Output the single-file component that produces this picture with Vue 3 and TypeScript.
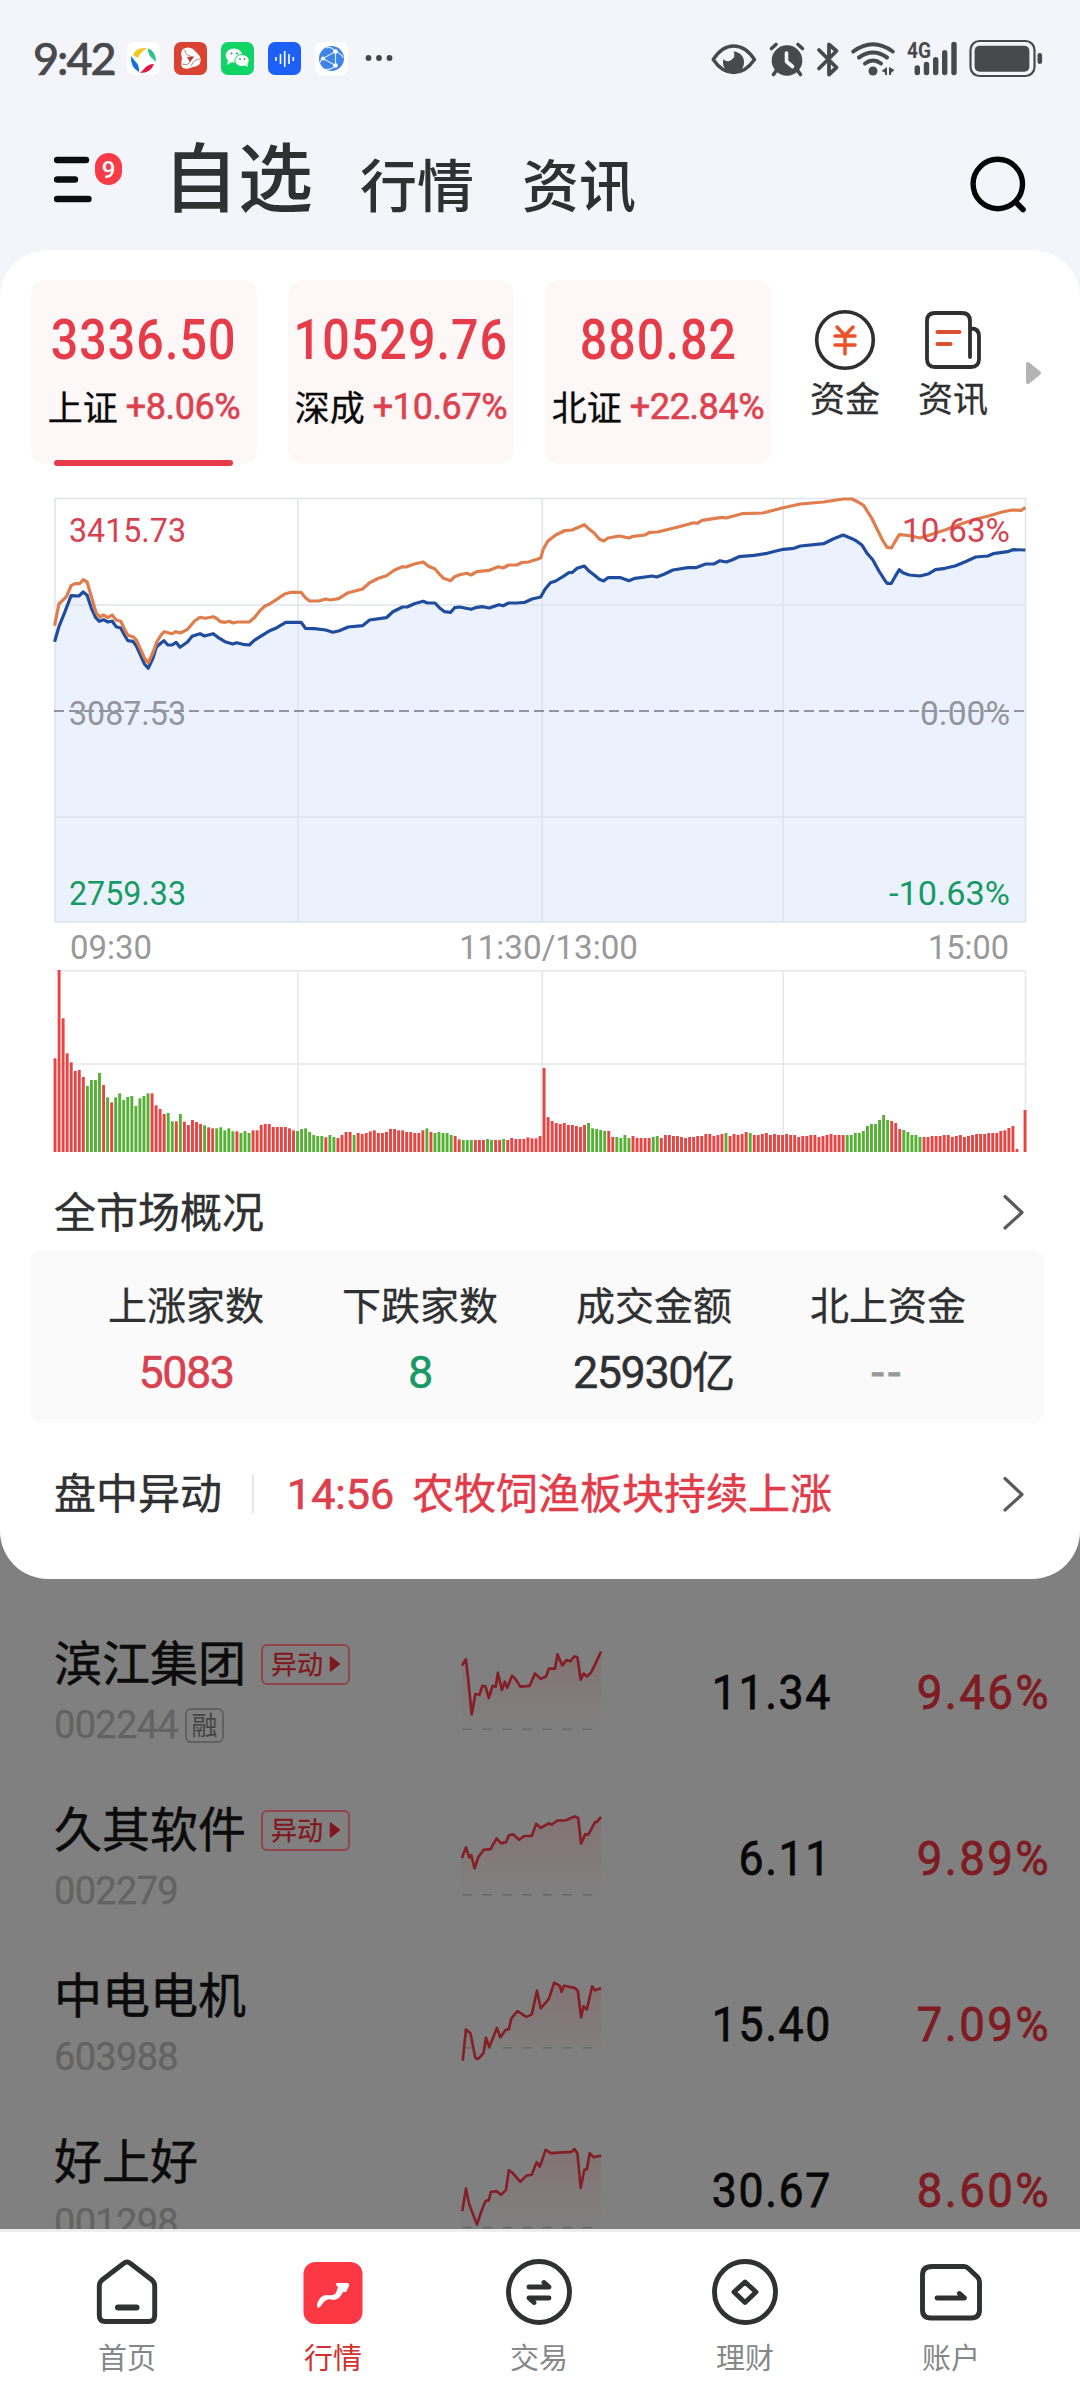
<script setup lang="ts">
interface IndexCard { value: string; name: string; change: string; active?: boolean }
interface Stat { label: string; value: string; unit?: string; tone: string }
interface Stock {
  name: string; code: string; price: string; change: string
  moving?: boolean; margin?: boolean; base: number; points: string
}

const indices: IndexCard[] = [
  { value: '3336.50', name: '上证', change: '+8.06%', active: true },
  { value: '10529.76', name: '深成', change: '+10.67%' },
  { value: '880.82', name: '北证', change: '+22.84%' },
]

const stats: Stat[] = [
  { label: '上涨家数', value: '5083', tone: 'up' },
  { label: '下跌家数', value: '8', tone: 'down' },
  { label: '成交金额', value: '25930', unit: '亿', tone: 'flat' },
  { label: '北上资金', value: '--', tone: 'none' },
]

/* Intraday samples: x in 1/2.8 px, y in 1/3 px from the chart origin */
const leadRaw =
  '153,467 165,402 186,380 199,347 210,341 223,341 233,329 244,336 256,380 269,428 280,441 290,435 302,443 314,435 325,450 338,454 348,476 358,496 372,500 382,510 404,563 415,578 428,548 440,514 452,494 460,485 482,491 492,485 505,489 525,478 545,453 560,442 575,445 597,440 606,445 617,455 630,457 642,454 652,459 665,456 698,456 712,443 728,422 742,408 755,402 775,388 797,372 815,367 843,367 855,383 867,393 893,393 912,387 925,390 948,386 975,368 1015,357 1035,338 1060,325 1082,317 1105,300 1127,290 1137,291 1160,282 1185,276 1200,289 1218,297 1232,314 1242,325 1262,332 1273,320 1287,314 1307,310 1319,315 1335,305 1370,301 1395,290 1409,294 1424,285 1447,285 1460,278 1480,276 1514,264 1521,238 1534,213 1556,195 1581,182 1602,180 1636,164 1648,176 1663,188 1679,208 1691,213 1702,204 1734,198 1761,204 1773,199 1806,195 1819,187 1841,186 1896,172 1943,158 1952,160 1966,151 2021,142 2033,144 2078,131 2136,129 2193,113 2241,102 2306,96 2361,87 2386,87 2401,95 2418,106 2441,145 2456,178 2471,210 2484,232 2496,234 2506,215 2518,194 2541,196 2576,204 2601,196 2646,180 2696,160 2736,146 2768,138 2806,126 2834,120 2859,121 2871,113'
const priceRaw =
  '153,515 165,470 180,430 199,377 221,378 233,366 244,376 256,415 268,443 278,454 290,449 302,456 314,453 325,470 338,474 348,494 358,512 372,514 382,528 404,581 415,595 428,565 438,531 450,520 459,512 470,525 482,525 493,517 504,532 525,516 538,499 560,491 572,498 597,491 610,502 630,515 652,522 663,518 680,523 698,525 712,511 752,484 775,473 800,457 843,457 855,475 880,476 912,480 932,487 950,482 975,471 1015,467 1035,450 1082,443 1100,425 1127,411 1140,411 1160,401 1185,394 1197,399 1218,399 1232,415 1245,425 1262,427 1273,413 1287,411 1319,418 1335,412 1352,410 1370,414 1397,404 1409,407 1424,399 1447,399 1470,397 1490,387 1514,381 1526,358 1541,338 1556,333 1576,320 1593,308 1603,307 1616,295 1636,288 1648,302 1663,314 1678,328 1690,333 1702,323 1738,323 1761,332 1778,325 1826,318 1839,321 1861,312 1884,300 1926,293 1948,293 1976,282 1999,282 2016,272 2034,276 2051,269 2069,260 2111,256 2148,250 2193,238 2223,235 2241,228 2306,221 2334,206 2361,195 2386,206 2401,215 2414,226 2428,250 2444,270 2461,303 2476,328 2484,340 2496,340 2506,320 2518,299 2528,308 2546,315 2576,318 2601,311 2619,299 2646,295 2676,287 2706,274 2732,261 2766,258 2781,251 2821,245 2836,239 2871,240'

const toPixels = (raw: string): string =>
  raw
    .split(' ')
    .map((p) => {
      const [x, y] = p.split(',').map(Number)
      return `${(x / 2.8).toFixed(1)},${(y / 3 + 470).toFixed(1)}`
    })
    .join(' ')

const leadLine = toPixels(leadRaw)
const priceLine = toPixels(priceRaw)
const priceArea = `54.6,922 ${priceLine} 1025.4,922`

/* One bar per minute: r/g is the direction, the number the bar's top in 1/3 px */
const volumeRaw =
  'r325 r60 r205 r310 r337 r363 r360 r381 g408 g390 g390 g369 r405 g442 r457 g442 g430 g450 g441 g438 g468 g445 g438 g430 r430 r466 r477 r492 g489 g514 r514 g492 r515 r525 r510 r516 r522 g526 r532 r535 g535 g532 g541 g535 g544 r544 g549 g543 g549 r541 r541 r525 r522 r522 r531 r531 r531 r531 r535 r541 g543 g537 g535 g546 g555 g558 g558 r562 g555 g561 r564 r555 r546 r546 g555 r549 r552 r549 r544 r541 r549 r549 r546 r537 r537 r541 r541 r546 r546 r549 r549 r541 g535 r546 g549 g546 g549 g549 g555 r558 r568 g570 g570 g570 r570 r570 r570 g567 g570 r570 r570 g567 r570 r564 r567 r567 r567 r562 r565 r565 r558 ' +
  'r354 r501 r513 r519 r522 r519 r525 r525 r528 r531 r525 g519 g535 g537 g540 g543 r543 r561 g561 g564 g555 g564 r558 r564 r564 r564 r564 g561 g558 r564 r555 r555 r558 r558 r561 r564 r561 r561 r558 r558 r552 r552 r558 r555 r552 g549 r558 r552 r555 r552 r546 g549 r555 r555 r552 r549 r555 r552 r555 r555 r552 r555 r555 r561 r558 r558 r555 r555 r561 r558 r555 r552 r555 r555 r555 g555 g555 g549 g549 g543 g528 g522 g522 g510 g495 g510 r513 r519 r537 g540 g546 g555 g555 g561 r561 r561 r558 r558 r558 r555 r555 r561 r558 r555 r561 r558 r555 r552 r552 r552 r549 r549 r549 r543 r541 r534 r528 r597 r606 r480'
const volumeList = volumeRaw.split(' ')
const volumes = volumeList.map((v, i) => {
  const h = (606 - Number(v.slice(1))) / 3
  return {
    x: 53.6 + (i * 970) / (volumeList.length - 1),
    y: 1152 - h,
    h,
    color: v[0] === 'r' ? '#e64543' : '#55b035',
  }
})

const stocks: Stock[] = [
  {
    name: '滨江集团', code: '002244', price: '11.34', change: '9.46%', moving: true, margin: true, base: 316,
    points: '1132,160 1142,145 1147,190 1156,280 1165,230 1175,232 1182,210 1190,212 1198,240 1207,210 1215,212 1220,178 1230,220 1237,200 1243,215 1255,185 1263,193 1275,212 1298,210 1311,180 1325,193 1338,187 1345,168 1360,168 1366,133 1378,160 1388,147 1398,150 1407,138 1415,140 1423,195 1430,180 1438,187 1448,178 1458,158 1473,126',
  },
  {
    name: '久其软件', code: '002279', price: '6.11', change: '9.89%', moving: true, base: 722,
    points: '1132,632 1142,606 1150,630 1155,625 1163,657 1172,630 1185,612 1202,610 1217,584 1228,596 1240,593 1247,576 1258,574 1272,587 1285,578 1303,578 1314,548 1325,558 1345,547 1352,550 1366,540 1385,540 1408,530 1417,534 1424,597 1434,574 1442,574 1458,544 1462,544 1473,531',
  },
  {
    name: '中电电机', code: '603988', price: '15.40', change: '7.09%', base: 1097,
    points: '1134,1128 1142,1052 1153,1062 1165,1122 1172,1124 1185,1110 1191,1072 1199,1095 1218,1048 1226,1071 1240,1052 1247,1052 1253,1025 1268,1007 1290,1021 1303,1015 1316,957 1325,1000 1345,977 1358,937 1372,945 1376,960 1382,945 1408,950 1416,957 1424,1022 1430,995 1438,1003 1451,946 1458,956 1473,951',
  },
  {
    name: '好上好', code: '001298', price: '30.67', change: '8.60%', base: 1537,
    points: '1133,1497 1142,1442 1150,1480 1169,1530 1180,1496 1190,1472 1198,1470 1203,1450 1217,1448 1228,1457 1240,1445 1247,1397 1256,1403 1275,1425 1290,1410 1303,1408 1315,1377 1323,1388 1337,1347 1350,1355 1400,1352 1408,1345 1415,1355 1423,1440 1432,1395 1438,1395 1445,1355 1455,1365 1473,1361',
  },
]
const sparkBox = (i: number): string => `1120 ${110 + i * 406.7} 365 230`

const tabs = ['首页', '行情', '交易', '理财', '账户']
</script>

<template>
  <div class="screen">
    <div class="status">
      <span class="clock">9:42</span>
      <svg class="apps" width="270" height="38" viewBox="125 40 270 38">
        <rect x="127" y="42" width="33" height="33" rx="7" fill="#fff" />
        <path d="M133 55Q136 47 147 48L143 51Q139 54 138 58Z" fill="#f4c61c" />
        <path d="M148 48.500Q156 51 156 62L153 59Q149 56 148 51Z" fill="#28c487" />
        <path d="M154 64Q151 73 140 73L144 69Q148 64 154 64Z" fill="#e3163f" />
        <path d="M139 72Q130 67 131 56L135 61Q140 66 139 72Z" fill="#1570d8" />
        <rect x="174" y="42" width="33" height="33" rx="7" fill="#da4331" />
        <path d="M183 49 Q188 46 193 49 Q196 52 198 54 Q202 58 200 63 Q199 66 193 67 Q187 70 183 68 Q180 66 182 59 Q180 51 183 49Z" fill="#fff" />
        <path d="M187 57h7l-4 5z" fill="#c0392b" />
        <path d="M185 50q0 6 9 7M200 59q-6 0-9 7M182 64q7 2 8-3" fill="none" stroke="#b9857d" stroke-width="1" />
        <rect x="221" y="42" width="33" height="33" rx="7" fill="#10d566" />
        <ellipse cx="234" cy="55.500" rx="8.300" ry="7" fill="#fff" />
        <path d="M228 60l-1 5 5-3z" fill="#fff" />
        <ellipse cx="242" cy="60.500" rx="7.200" ry="6" fill="#fff" stroke="#10d566" stroke-width="1" />
        <path d="M244 65l4 2-1-4z" fill="#fff" />
        <g fill="#1aa75a"><circle cx="231.500" cy="53.500" r="1.100" /><circle cx="237" cy="53.500" r="1.100" /><circle cx="240" cy="59" r="0.900" /><circle cx="244.500" cy="59" r="0.900" /></g>
        <rect x="268" y="42" width="33" height="33" rx="7" fill="#1c60f8" />
        <path d="M276 57v4M280.500 54v10M284.700 51v16M289 54v10M293.300 57v4" stroke="#fff" stroke-width="1.600" />
        <rect x="315" y="42" width="33" height="33" rx="7" fill="#fff" />
        <circle cx="331.500" cy="58.500" r="12.500" fill="#3e83e6" />
        <path d="M323 58.500L335.500 51.500V65.500ZM335.500 51.500Q331 46 326 48M335.500 65.500Q330 71 325 69M335.500 51.500Q342 54 343 58M323 58.500Q320 60 320 63" fill="none" stroke="#d5e6ff" stroke-width="1.200" />
        <g fill="#fff"><circle cx="323" cy="58.500" r="2" /><circle cx="335.500" cy="51.500" r="2.300" /><circle cx="335.500" cy="65.500" r="2.300" /></g>
        <g fill="#444548"><circle cx="368.500" cy="58" r="2.900" /><circle cx="379" cy="58" r="2.900" /><circle cx="389.500" cy="58" r="2.900" /></g>
      </svg>
      <svg class="signals" width="336" height="42" viewBox="709 37 336 42">
        <path d="M713.200 58.500Q722 45 733.700 45Q745.500 45 754.500 58.500Q745.500 71.500 733.700 71.500Q722 71.500 713.200 58.500Z" fill="none" stroke="#48494c" stroke-width="3.400" stroke-linejoin="round" />
        <path d="M733.500 50.500A10.500 10.800 0 1 1 723.500 58Q726 61.500 730 59.800Q736.500 56 733.500 50.500Z" fill="#48494c" />
        <circle cx="787" cy="59.500" r="15.300" fill="#48494c" />
        <path d="M786.500 52v8.500l6 5" fill="none" stroke="#f4f5fa" stroke-width="3.600" stroke-linecap="round" stroke-linejoin="round" />
        <path d="M771.500 47.500l4.500-4M802.500 47.500l-4.500-4M776 70l-2.500 3.500M798 70l2.500 3.500" stroke="#48494c" stroke-width="3.600" stroke-linecap="round" />
        <path d="M819 49L836.500 66.500L829 73.500V43.500L836.500 50L819 67.500" fill="none" stroke="#48494c" stroke-width="3.800" stroke-linecap="round" stroke-linejoin="round" />
        <g fill="none" stroke="#48494c" stroke-width="4" stroke-linecap="round"><path d="M853.300 50.500Q873 36 892.700 50.500" /><path d="M859 56.500Q873 46.500 887 56.500" /><path d="M865 62.500Q873 56.500 881 62.500" /></g>
        <circle cx="873" cy="70" r="4.500" fill="#48494c" />
        <path d="M887 66v8h-2v-2.500l-3.500-1.500zM889 66v8h2v-2l3.500-3z" fill="#48494c" />
        <text x="907" y="57" class="net" textLength="24" lengthAdjust="spacingAndGlyphs">4G</text>
        <path d="M917.300 67V71.500M926.500 63.500V71.500M935.700 58.800V71.500M944.700 51.800V71.500M954 43.500V71.500" stroke="#48494c" stroke-width="5.400" stroke-linecap="round" />
        <rect x="970.500" y="40" width="64" height="35" rx="9" fill="none" stroke="#48494c" stroke-width="2.200" />
        <rect x="974.600" y="44.700" width="54.800" height="26" rx="5" fill="#48494c" />
        <rect x="1037.500" y="52" width="4.600" height="11" rx="2.300" fill="#48494c" />
      </svg>
    </div>

    <header class="head">
      <svg class="menu" width="70" height="60" viewBox="54 150 70 60">
        <path d="M57 160H86M57 179.500H75M57 199H88.500" stroke="#0c0d10" stroke-width="6.400" stroke-linecap="round" />
        <rect x="95" y="153" width="27" height="32" rx="13.500" fill="#f73b47" />
        <text x="108.500" y="178" class="badge-num" text-anchor="middle">9</text>
      </svg>
      <h1>自选</h1>
      <h2 class="h-market">行情</h2>
      <h2 class="h-news">资讯</h2>
      <svg class="search" width="60" height="60" viewBox="968 154 60 60">
        <circle cx="997.800" cy="184" r="24.700" fill="none" stroke="#050505" stroke-width="5.400" />
        <path d="M1016.500 203l6.500 6.500" stroke="#050505" stroke-width="5.600" stroke-linecap="round" />
      </svg>
    </header>

    <section class="panel">
      <div class="indices">
        <div v-for="c in indices" :key="c.name" class="index">
          <div class="index-value num">{{ c.value }}</div>
          <div class="index-sub"><span>{{ c.name }}</span><b class="num">{{ c.change }}</b></div>
          <i v-if="c.active" class="underline"></i>
        </div>
        <div class="quick first">
          <svg width="64" height="64" viewBox="814 308 64 64">
            <circle cx="846" cy="340" r="28.300" fill="none" stroke="#2f2f2f" stroke-width="3.600" />
            <path d="M838 327l8 8.500l8-8.500M836 336h20M836 345h20M846 336v18" fill="none" stroke="#ee5028" stroke-width="3.500" stroke-linecap="round" />
          </svg>
          <span>资金</span>
        </div>
        <div class="quick">
          <svg width="64" height="64" viewBox="922 308 64 64">
            <path d="M971 357V321Q971 313 963 313H936Q928 313 928 321V359Q928 367 936 367H972Q980 367 980 359V336Q980 328.500 972 328.500" fill="none" stroke="#2f2f2f" stroke-width="3.800" stroke-linecap="round" />
            <path d="M938.500 332h22M938.500 344h13" stroke="#dd4f32" stroke-width="4" stroke-linecap="round" />
          </svg>
          <span>资讯</span>
        </div>
        <svg class="more" width="18" height="24" viewBox="0 0 18 24"><path d="M3 3l11 9l-11 9z" fill="#b4b4b4" stroke="#b4b4b4" stroke-width="4" stroke-linejoin="round" /></svg>
      </div>

      <svg class="chart" width="1080" height="696" viewBox="0 464 1080 696">
        <polygon :points="priceArea" fill="#ebf2fe" />
        <g stroke="#dfe3ea" stroke-width="1.500" fill="none">
          <rect x="55" y="498.500" width="970.500" height="423.500" />
          <path d="M55 605H1025M55 817H1025M298 498V922M542.200 498V922M783.200 498V922" />
          <path d="M55 970.700H1025M55 1064H1025M298 970.700V1152M542.200 970.700V1152M783.200 970.700V1152M1025.500 970.700V1152" stroke="#e6e6e8" />
        </g>
        <path d="M54 711H1024" stroke="#8f95a3" stroke-width="1.800" stroke-dasharray="10 5" />
        <polyline :points="priceLine" fill="none" stroke="#1f4c9c" stroke-width="3.200" stroke-linejoin="round" />
        <polyline :points="leadLine" fill="none" stroke="#e07d4c" stroke-width="3.200" stroke-linejoin="round" />
        <g class="axis">
          <text x="69" y="542" fill="#d8414f" textLength="117" lengthAdjust="spacingAndGlyphs">3415.73</text>
          <text x="69" y="725" fill="#93959c" textLength="117" lengthAdjust="spacingAndGlyphs">3087.53</text>
          <text x="69" y="905" fill="#179a63" textLength="117" lengthAdjust="spacingAndGlyphs">2759.33</text>
          <text x="902" y="542" fill="#d8414f" textLength="108" lengthAdjust="spacingAndGlyphs">10.63%</text>
          <text x="920" y="725" fill="#93959c" textLength="90" lengthAdjust="spacingAndGlyphs">0.00%</text>
          <text x="889" y="905" fill="#179a63" textLength="121" lengthAdjust="spacingAndGlyphs">-10.63%</text>
          <g fill="#999">
            <text x="70" y="959" textLength="82" lengthAdjust="spacingAndGlyphs">09:30</text>
            <text x="459" y="959" textLength="179" lengthAdjust="spacingAndGlyphs">11:30/13:00</text>
            <text x="928" y="959" textLength="81" lengthAdjust="spacingAndGlyphs">15:00</text>
          </g>
        </g>
        <rect v-for="(v, i) in volumes" :key="i" :x="v.x" :y="v.y" width="2.900" :height="v.h" :fill="v.color" />
      </svg>

      <div class="section-title">
        <span>全市场概况</span>
        <svg width="24" height="40" viewBox="0 0 24 40"><path d="M3 4.500L20 20.500L3 36" fill="none" stroke="#5a5a5a" stroke-width="3.200" stroke-linecap="round" stroke-linejoin="round" /></svg>
      </div>

      <div class="stats">
        <div v-for="s in stats" :key="s.label" class="stat">
          <div class="stat-label">{{ s.label }}</div>
          <div class="stat-value num" :class="s.tone">{{ s.value }}<span v-if="s.unit" class="unit">{{ s.unit }}</span></div>
        </div>
      </div>

      <div class="news">
        <span class="news-title">盘中异动</span>
        <i class="divider"></i>
        <span class="news-time num">14:56</span>
        <span class="news-text">农牧饲渔板块持续上涨</span>
        <svg width="24" height="40" viewBox="0 0 24 40"><path d="M3 4.500L20 20.500L3 36" fill="none" stroke="#5a5a5a" stroke-width="3.200" stroke-linecap="round" stroke-linejoin="round" /></svg>
      </div>
    </section>

    <section class="list">
      <div v-for="(s, i) in stocks" :key="s.code" class="stock">
        <div class="ident">
          <div class="name-line">
            <span class="name">{{ s.name }}</span>
            <span v-if="s.moving" class="moving">异动<svg width="12" height="18" viewBox="0 0 12 18"><path d="M1.500 2L10.500 9L1.500 16Z" fill="#80181f" stroke="#80181f" stroke-width="1.500" stroke-linejoin="round" /></svg></span>
          </div>
          <div class="code-line">
            <span class="code num">{{ s.code }}</span>
            <span v-if="s.margin" class="margin">融</span>
          </div>
        </div>
        <svg class="spark" width="149" height="93.900" :viewBox="sparkBox(i)">
          <defs>
            <linearGradient :id="'fade' + i" x1="0" y1="0" x2="0" y2="1">
              <stop offset="0" stop-color="#8c4c50" stop-opacity="0.260" />
              <stop offset="1" stop-color="#8c4c50" stop-opacity="0" />
            </linearGradient>
          </defs>
          <polygon :points="`1132,${s.base} ${s.points} 1473,${s.base}`" :fill="`url(#fade${i})`" />
          <path :d="`M1134 ${s.base}H1460`" stroke="#666" stroke-width="3.500" stroke-dasharray="22 27" />
          <polyline :points="s.points" fill="none" stroke="#851f27" stroke-width="6.500" stroke-linejoin="round" />
        </svg>
        <span class="price num">{{ s.price }}</span>
        <span class="pct num">{{ s.change }}</span>
      </div>
    </section>

    <nav class="tabs">
      <div v-for="(t, i) in tabs" :key="t" class="tab" :class="{ on: i === 1 }">
        <svg width="72" height="72" viewBox="-36 -36 72 72" fill="none" stroke="#303131" stroke-width="4.900" stroke-linecap="round" stroke-linejoin="round">
          <path v-if="i === 0" d="M-3.500 -28.500Q0 -31.500 3.500 -28.500L25 -12Q27.700 -9.500 27.700 -6V23.500Q27.700 29.500 21.500 29.500H-21.500Q-27.700 29.500 -27.700 23.500V-6Q-27.700 -9.500 -25 -12Z" />
          <path v-if="i === 0" d="M-9 15.500H9.500" stroke-width="6" />
          <g v-else-if="i === 1" stroke="none">
            <rect x="-29.500" y="-30" width="59" height="62" rx="12" fill="#fb3843" />
            <path d="M-16 13C-15 7 -11 3 -6 3C-1 4 3 3 4 -2L5 -5L3 -7Q2 -9 5 -9H14Q17 -9 16 -6L13 0L10 0C8 5 4 8 0 8C-5 6 -9 9 -12 14Q-16 18 -16 13Z" fill="#fff" />
          </g>
          <g v-else-if="i === 2">
            <circle r="30.500" />
            <path d="M-10 -5H10L5 -9.500M10 6H-10L-5 10.500" />
          </g>
          <g v-else-if="i === 3">
            <circle r="30.500" />
            <path d="M0 -10L11 0L0 10.500L-11 0Z" />
          </g>
          <path v-else-if="i === 4" d="M-19 -25.500H13Q15.500 -25.500 17.500 -23.500L26.500 -15Q28.500 -13 28.500 -10V18Q28.500 26 20 26H-20Q-28.500 26 -28.500 18V-17Q-28.500 -25.500 -19 -25.500ZM-14 6H13.500L8.500 1.500" />
        </svg>
        <span>{{ t }}</span>
      </div>
    </nav>
  </div>
</template>

<style>
body { background: #fff; }
</style>

<style scoped>
.screen {
  width: 1080px;
  height: 2400px;
  overflow: hidden;
  display: flex;
  flex-direction: column;
  background: #f4f5fa;
  color: #2f3031;
  font-family: "Noto Sans CJK SC", sans-serif;
}
.screen svg { display: block; flex: none; }
.num { font-family: Roboto, "Noto Sans CJK SC", sans-serif; font-weight: 500; }

.status { height: 118px; flex: none; display: flex; align-items: center; padding: 0 35px 0 33px; box-sizing: border-box; }
.clock { width: 92px; margin-top: -3px; font: 500 45px/60px Lato, sans-serif; letter-spacing: -2px; color: #48494c; white-space: nowrap; -webkit-text-stroke: 0.6px #48494c; }
.signals { margin-left: auto; }
.net { font: 700 22px Roboto, sans-serif; fill: #48494c; }

.head { height: 132px; flex: none; display: flex; align-items: center; padding: 0 52px 0 54px; box-sizing: border-box; }
.menu { margin-top: -8px; }
.badge-num { font: 500 24px Roboto, sans-serif; fill: #fff; }
.head h1 { margin: -20px 0 0 39px; font-size: 75px; line-height: 90px; font-weight: 500; }
.head h2 { margin: -5px 0 0; font-size: 57px; line-height: 80px; font-weight: 500; }
.head .h-market { margin-left: 47px; }
.head .h-news { margin-left: 48px; }
.search { margin-left: auto; }

.panel { position: relative; z-index: 1; height: 1329px; flex: none; box-sizing: border-box; padding-top: 30px; background: #fff; border-radius: 48px; }
.indices { display: flex; align-items: flex-start; height: 184px; padding-left: 31px; }
.index { position: relative; width: 226px; height: 184px; margin-right: 31px; box-sizing: border-box; padding-top: 28px; border-radius: 14px; background: #fef7f7; display: flex; flex-direction: column; align-items: center; }
.index-value { font-size: 55px; line-height: 64px; letter-spacing: 1.200px; transform: scaleX(0.88); color: #e63c4a; white-space: nowrap; }
.index-sub { display: flex; align-items: center; gap: 8px; margin-top: 10px; height: 50px; font-size: 35px; line-height: 50px; color: #0a0a0a; white-space: nowrap; -webkit-text-stroke: 0.3px; }
.index-sub span { margin-top: -3px; }
.index-sub b { font-size: 36px; font-weight: 400; letter-spacing: -0.400px; color: #dc4350; -webkit-text-stroke: 0.6px #dc4350; }
.underline { position: absolute; left: 23px; bottom: -2px; width: 179px; height: 6px; border-radius: 3px; background: #e63c4a; }
.quick { width: 104px; margin: 28px 2px 0; display: flex; flex-direction: column; align-items: center; font-size: 35px; line-height: 50px; -webkit-text-stroke: 0.3px; }
.quick.first { margin-left: -9px; }
.more { margin: 81px 0 0 18px; }
.axis { font: 400 33px Roboto, sans-serif; }

.section-title { height: 90px; box-sizing: border-box; padding: 14px 54px 0 54px; display: flex; align-items: center; justify-content: space-between; font-size: 42px; line-height: 60px; -webkit-text-stroke: 0.4px; }
.section-title span { margin-top: -5px; }
.stats { height: 173px; margin: 0 36px 0 30px; padding: 0 39px 0 39px; box-sizing: border-box; display: flex; background: #fafafa; border-radius: 12px; }
.stat { flex: 1; display: flex; flex-direction: column; align-items: center; }
.stat-label { margin-top: 25px; font-size: 39px; line-height: 56px; -webkit-text-stroke: 0.3px; }
.stat-value { margin-top: 11px; font-size: 45px; line-height: 62px; letter-spacing: -1.500px; white-space: nowrap; -webkit-text-stroke: 0.5px; }
.stat-value.num { font-weight: 400; }
.unit { font-size: 43px; letter-spacing: 0; }
.up { color: #d8414f; }
.down { color: #179a63; }
.none { color: #999; letter-spacing: 4px; -webkit-text-stroke: 1px; }
.news { height: 141px; box-sizing: border-box; padding: 0 54px 0 54px; display: flex; align-items: center; font-size: 42px; line-height: 60px; white-space: nowrap; -webkit-text-stroke: 0.4px; }
.news svg { margin-left: auto; }
.news-title, .news-text { margin-top: -5px; }
.divider { width: 2px; height: 38px; margin: 0 33px 0 30px; background: #e6e6e6; }
.news-time { font-size: 43px; letter-spacing: 0; color: #dd3f4d; }
.news-time.num { font-weight: 400; -webkit-text-stroke: 0.7px; }
.news-text { margin-left: 18px; color: #e23b49; }

.list { height: 698px; margin-top: -48px; padding-top: 99px; box-sizing: border-box; flex: none; overflow: hidden; background: #808080; }
.stock { height: 166px; display: flex; align-items: flex-start; position: relative; }
.ident { width: 457px; padding-left: 54px; box-sizing: border-box; }
.name-line { display: flex; align-items: center; height: 64px; }
.name { font-size: 48px; line-height: 64px; color: #0b0b0b; font-weight: 400; margin-top: -4px; -webkit-text-stroke: 0.5px; }
.moving { display: flex; align-items: center; gap: 6px; margin: 4px 0 0 15px; width: 89px; height: 41px; box-sizing: border-box; padding: 0 0 3px 8px; border: 2px solid #91444a; border-radius: 6px; font-size: 26px; line-height: 36px; color: #80181f; -webkit-text-stroke: 0.3px; }
.moving svg { margin-top: 3px; }
.code-line { display: flex; align-items: center; height: 40px; margin-top: 11px; }
.code { font-size: 38px; line-height: 40px; letter-spacing: -0.700px; color: #636363; -webkit-text-stroke: 0.3px; }
.code.num { font-weight: 400; }
.margin { margin-left: 7px; width: 39px; height: 35px; box-sizing: border-box; border: 2px solid #616161; border-radius: 6px; font-size: 26px; line-height: 28px; text-align: center; color: #444; }
.spark { margin-top: 15px; }
.price { width: 226px; margin-top: 33px; text-align: right; font-size: 49px; line-height: 60px; letter-spacing: 1.800px; transform: scaleX(0.91); transform-origin: right center; color: #080808; }
.pct { width: 219px; margin-top: 33px; text-align: right; font-size: 49px; line-height: 60px; letter-spacing: 2.600px; transform: scaleX(0.93); transform-origin: right center; color: #7e1b23; }
.price.num, .pct.num { font-weight: 400; -webkit-text-stroke: 0.8px; }

.tabs { height: 171px; flex: none; box-sizing: border-box; padding: 24px 26px 0 24px; display: flex; background: #fff; border-top: 3px solid #ededed; }
.tab { flex: 1; display: flex; flex-direction: column; align-items: center; font-size: 29px; line-height: 40px; color: #858889; }
.tab span { margin-top: 8px; }
.tab.on { color: #d0312f; }
</style>
